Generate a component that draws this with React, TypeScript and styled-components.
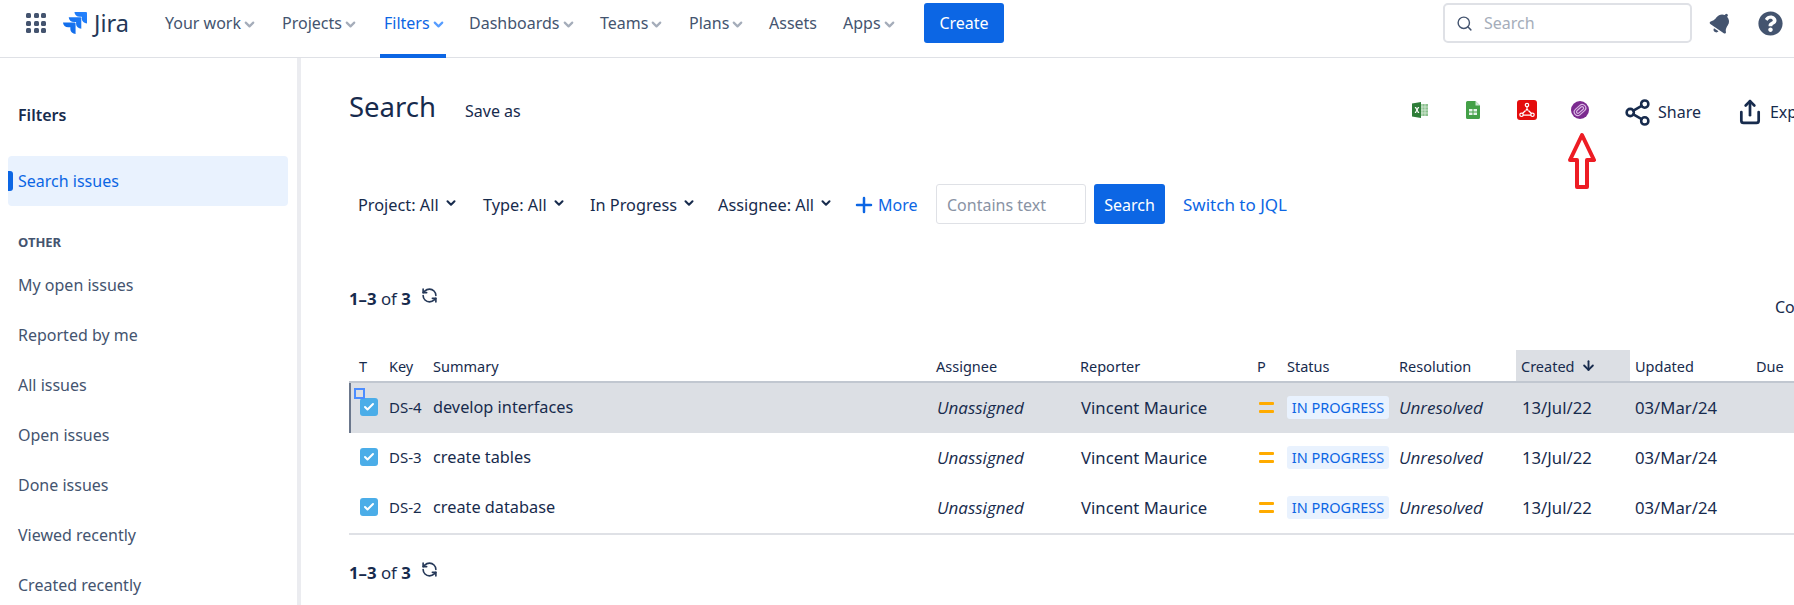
import styled, { createGlobalStyle } from "styled-components";
import { ArrowDown, Check, ChevronDown, Plus, RefreshCcw, Search as SearchIcon, Share, Share2 } from "lucide-react";
import { FaBell, FaQuestionCircle } from "react-icons/fa";

const GlobalStyle = createGlobalStyle`
    html, body {
        margin: 0;
        height: 100%;
        overflow: hidden;
        background: #fff;
    }
    body {
        font-family: "Noto Sans", "Open Sans", sans-serif;
        font-size: 15px;
        color: #172b4d;
    }
`;

const Page = styled.div`
    position: relative;
    width: 1794px;
    height: 605px;
    overflow: hidden;
`;

/* top bar */
const Nav = styled.header`
    display: flex;
    align-items: flex-start;
    box-sizing: border-box;
    height: 58px;
    padding: 3px 0 0 26px;
    border-bottom: 1px solid #dfe1e6;
`;
const AppGrid = styled.div`
    display: grid;
    grid-template-columns: repeat(3, 5px);
    grid-auto-rows: 5px;
    gap: 2.5px;
    margin: 10px 17px 0 0;
`;
const Dot = styled.span`
    background: #44546f;
    border-radius: 1.5px;
`;
const Logo = styled.div`
    display: flex;
    align-items: center;
    gap: 7px;
    width: 102px;
    height: 40px;
    flex-shrink: 0;
`;
const LogoText = styled.span`
    font-size: 23.500px;
    line-height: 28px;
    color: #253858;
`;
const NavList = styled.nav`
    display: flex;
    margin-left: -4px;
    gap: 19px;
`;
const NavItem = styled.a<{ $active?: boolean; $w: number }>`
    display: flex;
    align-items: flex-start;
    gap: 1px;
    box-sizing: border-box;
    flex: 0 0 ${(p) => p.$w}px;
    height: 55px;
    padding: 0 0 0 4px;
    font-size: 16px;
    line-height: 40px;
    white-space: nowrap;
    color: ${(p) => (p.$active ? "#0c66e4" : "#44546f")};
    border-bottom: 4px solid ${(p) => (p.$active ? "#0c66e4" : "transparent")};
    svg {
        margin-top: 14px;
        flex-shrink: 0;
        color: ${(p) => (p.$active ? "#579dff" : "#a5adba")};
    }
`;
const CreateButton = styled.button`
    height: 40px;
    width: 80px;
    margin-left: 27px;
    border: 0;
    border-radius: 3px;
    background: #0c66e4;
    color: #fff;
    font: inherit;
    font-size: 16px;
`;
const NavRight = styled.div`
    display: flex;
    align-items: center;
    height: 40px;
    margin-left: auto;
    padding-right: 11px;
`;
const GlobalSearch = styled.div`
    display: flex;
    align-items: center;
    gap: 11px;
    box-sizing: border-box;
    width: 249px;
    height: 40px;
    padding-left: 11px;
    border: 2px solid #dfe1e6;
    border-radius: 5px;
    color: #a5adba;
    font-size: 16px;
    svg {
        color: #44546f;
    }
`;
const BellButton = styled.span`
    display: flex;
    margin: 0 26px 0 18px;
    color: #44546f;
    transform: rotate(35deg);
`;
const HelpButton = styled.span`
    display: flex;
    color: #44546f;
`;

/* body */
const Body = styled.div`
    display: flex;
    height: 547px;
`;
const Sidebar = styled.aside`
    flex: 0 0 301px;
    box-sizing: border-box;
    padding: 0 9px 0 8px;
    border-right: 4px solid #ebecf0;
`;
const SideTitle = styled.h2`
    margin: 0;
    padding: 44px 0 28px 10px;
    font-size: 16px;
    line-height: 26px;
    font-weight: 600;
    color: #172b4d;
`;
const SideHeading = styled.h3`
    margin: 0;
    padding: 27px 0 9px 10px;
    font-size: 13px;
    line-height: 18px;
    font-weight: 700;
    color: #44546f;
`;
const SideItem = styled.a<{ $active?: boolean }>`
    position: relative;
    display: flex;
    align-items: center;
    height: 50px;
    padding-left: 10px;
    font-size: 16px;
    border-radius: 4px;
    color: ${(p) => (p.$active ? "#0c66e4" : "#44546f")};
    background: ${(p) => (p.$active ? "#e9f2fe" : "transparent")};
    ${(p) =>
        p.$active &&
        `&::before {
            content: "";
            position: absolute;
            left: 0;
            top: 15px;
            width: 5px;
            height: 20px;
            background: #0c66e4;
            border-radius: 0 3px 3px 0;
        }`}
`;

const Main = styled.main`
    flex: 1;
    min-width: 0;
    padding-left: 48px;
    overflow: hidden;
`;
const TitleRow = styled.div`
    display: grid;
    grid-template-columns: 1063px auto;
    align-items: start;
    padding-top: 30px;
    height: 38px;
`;
const TitleGroup = styled.div`
    display: flex;
    align-items: baseline;
    gap: 29px;
`;
const Title = styled.h1`
    margin: 0;
    font-size: 27.500px;
    line-height: 38px;
    font-weight: 400;
    color: #172b4d;
`;
const SaveAs = styled.span`
    font-size: 16px;
`;
const Actions = styled.div`
    display: flex;
    align-items: center;
    height: 44px;
    white-space: nowrap;
`;
const ExportIcon = styled.span<{ $gap: number }>`
    display: flex;
    margin-right: ${(p) => p.$gap}px;
`;
const TextAction = styled.span<{ $gap?: number; $iconGap: number }>`
    display: flex;
    align-items: center;
    gap: ${(p) => p.$iconGap}px;
    margin-top: 4px;
    margin-right: ${(p) => p.$gap ?? 0}px;
    font-size: 16px;
    color: #172b4d;
`;

const FilterRow = styled.div`
    display: flex;
    align-items: center;
    height: 40px;
    margin-top: 58px;
    padding-left: 9px;
    white-space: nowrap;
`;
const FilterButton = styled.span<{ $w: number }>`
    display: flex;
    align-items: center;
    gap: 5px;
    flex: 0 0 ${(p) => p.$w}px;
    padding-top: 1px;
    font-size: 16.300px;
    svg {
        margin-top: -4px;
    }
`;
const MoreButton = styled.span`
    display: flex;
    align-items: center;
    gap: 2px;
    flex: 0 0 84px;
    padding-top: 1px;
    color: #0c66e4;
    font-size: 16px;
`;
const TextInput = styled.input`
    box-sizing: border-box;
    width: 150px;
    height: 40px;
    padding: 2px 10px 0;
    border: 1px solid #dfe1e6;
    border-radius: 3px;
    font: inherit;
    font-size: 16px;
    &::placeholder {
        color: #8993a4;
    }
`;
const SearchButton = styled.button`
    width: 71px;
    height: 40px;
    margin-left: 8px;
    padding: 2px 0 0;
    border: 0;
    border-radius: 3px;
    background: #0c66e4;
    color: #fff;
    font: inherit;
    font-size: 16px;
`;
const JqlLink = styled.a`
    margin-left: 18px;
    font-size: 17px;
    color: #0c66e4;
`;

const CountRow = styled.div`
    display: grid;
    grid-template-columns: 1426px auto;
    height: 32px;
    margin-top: 62px;
`;
const Count = styled.div`
    display: flex;
    align-items: center;
    gap: 10px;
    height: 24px;
    font-size: 16.800px;
    white-space: nowrap;
    b {
        font-weight: 700;
    }
    svg {
        margin-top: -5px;
        color: #253858;
    }
`;
const ColumnsLabel = styled.span`
    align-self: end;
    font-size: 16px;
    line-height: 22px;
`;

const IssueTable = styled.table`
    width: 1445px;
    margin-top: 32px;
    border-collapse: collapse;
    table-layout: fixed;
    border-bottom: 2px solid #dfe1e6;
    th {
        box-sizing: border-box;
        height: 32px;
        padding: 0;
        border-bottom: 2px solid #c1c7d0;
        font-size: 14.500px;
        font-weight: 400;
        text-align: left;
        vertical-align: middle;
        white-space: nowrap;
    }
    td {
        height: 48px;
        padding: 0 0 2px;
        font-size: 16.700px;
        white-space: nowrap;
    }
`;
const HeadCell = styled.th<{ $w: number; $pad?: number; $sorted?: boolean }>`
    width: ${(p) => p.$w}px;
    && {
        padding-left: ${(p) => p.$pad ?? 0}px;
        background: ${(p) => (p.$sorted ? "#dcdfe4" : "transparent")};
    }
`;
const SortArrow = styled.span`
    display: inline-flex;
    margin-left: 6px;
    vertical-align: -1px;
`;
const IssueRow = styled.tr<{ $selected?: boolean }>`
    background: ${(p) => (p.$selected ? "#dcdfe4" : "transparent")};
    td:first-child {
        box-shadow: ${(p) => (p.$selected ? "inset 2px 0 0 #6b778c" : "none")};
    }
`;
const TypeCell = styled.td`
    position: relative;
    && {
        padding-left: 11px;
    }
`;
const TypeBox = styled.span`
    display: flex;
    align-items: center;
    justify-content: center;
    width: 18px;
    height: 18px;
    border-radius: 3px;
    background: #4bade8;
    color: #fff;
`;
const FocusMark = styled.span`
    position: absolute;
    left: 5px;
    top: 5px;
    box-sizing: border-box;
    width: 11px;
    height: 11px;
    border: 2px solid #4c8dff;
`;
const KeyCell = styled.td`
    && {
        font-size: 15px;
    }
`;
const SummaryCell = styled.td`
    && {
        font-size: 16.300px;
    }
`;
const ItalicCell = styled.td<{ $pad?: number }>`
    && {
        padding-left: ${(p) => p.$pad ?? 0}px;
        font-family: "Open Sans", sans-serif;
        font-style: italic;
        font-size: 17px;
    }
`;
const PadCell = styled.td<{ $pad: number }>`
    && {
        padding-left: ${(p) => p.$pad}px;
    }
`;
const PriorityBars = styled.span`
    display: flex;
    flex-direction: column;
    gap: 5px;
    width: 15px;
    margin-left: 2px;
    span {
        height: 3px;
        border-radius: 1px;
        background: #ffab00;
    }
`;
const Lozenge = styled.span`
    display: inline-flex;
    align-items: center;
    justify-content: center;
    box-sizing: border-box;
    width: 102px;
    height: 23px;
    border-radius: 3px;
    background: #e9f2fe;
    color: #0c66e4;
    font-size: 14.500px;
`;
const BottomCount = styled(Count)`
    margin-top: 25px;
`;

const NoteArrow = styled.svg`
    position: absolute;
    left: 1568px;
    top: 132px;
`;

const navItems = [
    { label: "Your work", menu: true, w: 98 },
    { label: "Projects", menu: true, w: 83 },
    { label: "Filters", menu: true, active: true, w: 66 },
    { label: "Dashboards", menu: true, w: 112 },
    { label: "Teams", menu: true, w: 70 },
    { label: "Plans", menu: true, w: 61 },
    { label: "Assets", menu: false, w: 55 },
    { label: "Apps", menu: true, w: 58 },
];
const sideItems = ["My open issues", "Reported by me", "All issues", "Open issues", "Done issues", "Viewed recently", "Created recently"];
const filters = [
    { label: "Project: All", w: 125 },
    { label: "Type: All", w: 107 },
    { label: "In Progress", w: 128 },
    { label: "Assignee: All", w: 134 },
];
const issues = [
    { key: "DS-4", summary: "develop interfaces", selected: true },
    { key: "DS-3", summary: "create tables" },
    { key: "DS-2", summary: "create database" },
];

function JiraMark() {
    return (
        <svg width="24" height="22" viewBox="0 0 24 24" preserveAspectRatio="none">
            <defs>
                <linearGradient id="jiraBlue" x1="0" y1="1" x2="1" y2="0">
                    <stop offset="0" stopColor="#0c66e4" />
                    <stop offset="1" stopColor="#2684ff" />
                </linearGradient>
            </defs>
            <path
                fill="url(#jiraBlue)"
                d="M11.571 11.513H0a5.218 5.218 0 0 0 5.232 5.215h2.13v2.057A5.215 5.215 0 0 0 12.575 24V12.518a1.005 1.005 0 0 0-1.005-1.005zm5.723-5.756H5.736a5.215 5.215 0 0 0 5.215 5.214h2.129v2.058a5.218 5.218 0 0 0 5.215 5.214V6.758a1.001 1.001 0 0 0-1.001-1.001zM23.013 0H11.455a5.215 5.215 0 0 0 5.215 5.215h2.129v2.057A5.215 5.215 0 0 0 24 12.483V1.005A1.001 1.001 0 0 0 23.013 0z"
            />
        </svg>
    );
}

function ExcelIcon() {
    return (
        <svg width="16" height="16" viewBox="0 0 16 16">
            <rect x="6" y="2" width="10" height="12" fill="#8cc08f" />
            <path d="M10 2v12M13 2v12M6 5h10M6 8h10M6 11h10" stroke="#e3f1e3" strokeWidth="0.7" />
            <path d="M0 1.5 9 0v16L0 14.5z" fill="#2e7d38" />
            <path d="M2.6 5h1.5l.9 1.8.9-1.8h1.4L5.7 8l1.7 3H5.900l-.9-1.900-1 1.900H2.600L4.300 8z" fill="#fff" />
        </svg>
    );
}

function SheetIcon() {
    return (
        <svg width="14" height="18" viewBox="0 0 14 18">
            <path d="M1.500 0H9.500L14 4.500V16.500A1.500 1.500 0 0 1 12.500 18H1.500A1.500 1.500 0 0 1 0 16.500V1.500A1.500 1.500 0 0 1 1.500 0z" fill="#43a047" />
            <path d="M9.500 0 14 4.500H9.500z" fill="#cfe8d5" />
            <path d="M3 8h8v6H3z" fill="#e6f4ea" />
            <path d="M3 11h8M7 8v6" stroke="#43a047" strokeWidth="1" />
        </svg>
    );
}

function PdfIcon() {
    return (
        <svg width="20" height="20" viewBox="0 0 20 20">
            <rect width="20" height="20" rx="3" fill="#e40d0d" />
            <path d="M10 8V5.500M8.600 10.500 5.500 13.500M11.400 10.500l3.100 3M6 15.200h8" stroke="#fff" strokeWidth="1.300" fill="none" />
            <circle cx="10" cy="5" r="1.700" fill="#e40d0d" stroke="#fff" strokeWidth="1.200" />
            <circle cx="10" cy="9.500" r="1.200" fill="#fff" />
            <circle cx="4.500" cy="14.800" r="1.700" fill="#e40d0d" stroke="#fff" strokeWidth="1.200" />
            <circle cx="15.500" cy="14.800" r="1.700" fill="#e40d0d" stroke="#fff" strokeWidth="1.200" />
        </svg>
    );
}

function AttachIcon() {
    return (
        <svg width="18" height="18" viewBox="0 0 18 18">
            <circle cx="9" cy="9" r="9" fill="#7b2a8f" />
            <g transform="rotate(-42 9 9)" fill="none" stroke="#d9b8e2" strokeWidth="1.200">
                <rect x="2.500" y="5.500" width="13" height="7" rx="3.500" />
                <rect x="4.800" y="7.500" width="8.500" height="3" rx="1.500" />
            </g>
        </svg>
    );
}

function CountLine({ bottom }: { bottom?: boolean }) {
    const Line = bottom ? BottomCount : Count;
    return (
        <Line>
            <span>
                <b>1–3</b> of <b>3</b>
            </span>
            <RefreshCcw size={17} strokeWidth={2.3} />
        </Line>
    );
}

export default function App() {
    return (
        <Page>
            <GlobalStyle />
            <Nav>
                <AppGrid>
                    {Array.from({ length: 9 }).map((_, i) => (
                        <Dot key={i} />
                    ))}
                </AppGrid>
                <Logo>
                    <JiraMark />
                    <LogoText>Jira</LogoText>
                </Logo>
                <NavList>
                    {navItems.map((item) => (
                        <NavItem key={item.label} $active={item.active} $w={item.w}>
                            {item.label}
                            {item.menu && <ChevronDown size={15} strokeWidth={3.5} />}
                        </NavItem>
                    ))}
                </NavList>
                <CreateButton>Create</CreateButton>
                <NavRight>
                    <GlobalSearch>
                        <SearchIcon size={17} strokeWidth={2} />
                        Search
                    </GlobalSearch>
                    <BellButton>
                        <FaBell size={22} />
                    </BellButton>
                    <HelpButton>
                        <FaQuestionCircle size={25} />
                    </HelpButton>
                </NavRight>
            </Nav>
            <Body>
                <Sidebar>
                    <SideTitle>Filters</SideTitle>
                    <SideItem $active>Search issues</SideItem>
                    <SideHeading>OTHER</SideHeading>
                    {sideItems.map((label) => (
                        <SideItem key={label}>{label}</SideItem>
                    ))}
                </Sidebar>
                <Main>
                    <TitleRow>
                        <TitleGroup>
                            <Title>Search</Title>
                            <SaveAs>Save as</SaveAs>
                        </TitleGroup>
                        <Actions>
                            <ExportIcon $gap={38}>
                                <ExcelIcon />
                            </ExportIcon>
                            <ExportIcon $gap={37}>
                                <SheetIcon />
                            </ExportIcon>
                            <ExportIcon $gap={34}>
                                <PdfIcon />
                            </ExportIcon>
                            <ExportIcon $gap={34}>
                                <AttachIcon />
                            </ExportIcon>
                            <TextAction $gap={36} $iconGap={6}>
                                <Share2 size={29} strokeWidth={2.1} />
                                Share
                            </TextAction>
                            <TextAction $iconGap={7}>
                                <Share size={26} strokeWidth={2.5} />
                                Export
                            </TextAction>
                        </Actions>
                    </TitleRow>
                    <FilterRow>
                        {filters.map((f) => (
                            <FilterButton key={f.label} $w={f.w}>
                                {f.label}
                                <ChevronDown size={14} strokeWidth={3.5} />
                            </FilterButton>
                        ))}
                        <MoreButton>
                            <Plus size={24} strokeWidth={2.5} />
                            More
                        </MoreButton>
                        <TextInput placeholder="Contains text" />
                        <SearchButton>Search</SearchButton>
                        <JqlLink>Switch to JQL</JqlLink>
                    </FilterRow>
                    <CountRow>
                        <CountLine />
                        <ColumnsLabel>Columns</ColumnsLabel>
                    </CountRow>
                    <IssueTable>
                        <thead>
                            <tr>
                                <HeadCell $w={40} $pad={10}>T</HeadCell>
                                <HeadCell $w={44}>Key</HeadCell>
                                <HeadCell $w={503}>Summary</HeadCell>
                                <HeadCell $w={144}>Assignee</HeadCell>
                                <HeadCell $w={177}>Reporter</HeadCell>
                                <HeadCell $w={30}>P</HeadCell>
                                <HeadCell $w={112}>Status</HeadCell>
                                <HeadCell $w={117}>Resolution</HeadCell>
                                <HeadCell $w={114} $pad={5} $sorted>
                                    Created
                                    <SortArrow>
                                        <ArrowDown size={15} strokeWidth={3} />
                                    </SortArrow>
                                </HeadCell>
                                <HeadCell $w={126} $pad={5}>Updated</HeadCell>
                                <HeadCell $w={38}>Due</HeadCell>
                            </tr>
                        </thead>
                        <tbody>
                            {issues.map((issue) => (
                                <IssueRow key={issue.key} $selected={issue.selected}>
                                    <TypeCell>
                                        {issue.selected && <FocusMark />}
                                        <TypeBox>
                                            <Check size={12} strokeWidth={4} />
                                        </TypeBox>
                                    </TypeCell>
                                    <KeyCell>{issue.key}</KeyCell>
                                    <SummaryCell>{issue.summary}</SummaryCell>
                                    <ItalicCell $pad={1}>Unassigned</ItalicCell>
                                    <PadCell $pad={1}>Vincent Maurice</PadCell>
                                    <td>
                                        <PriorityBars>
                                            <span />
                                            <span />
                                        </PriorityBars>
                                    </td>
                                    <td>
                                        <Lozenge>IN PROGRESS</Lozenge>
                                    </td>
                                    <ItalicCell>Unresolved</ItalicCell>
                                    <PadCell $pad={6}>13/Jul/22</PadCell>
                                    <PadCell $pad={5}>03/Mar/24</PadCell>
                                    <td />
                                </IssueRow>
                            ))}
                        </tbody>
                    </IssueTable>
                    <CountLine bottom />
                </Main>
            </Body>
            <NoteArrow width="28" height="57" viewBox="0 0 28 57">
                <polygon points="14,3 26,28 19,28 19,55 9,55 9,28 2,28" fill="none" stroke="#ed1c24" strokeWidth="4" strokeLinejoin="round" />
            </NoteArrow>
        </Page>
    );
}
